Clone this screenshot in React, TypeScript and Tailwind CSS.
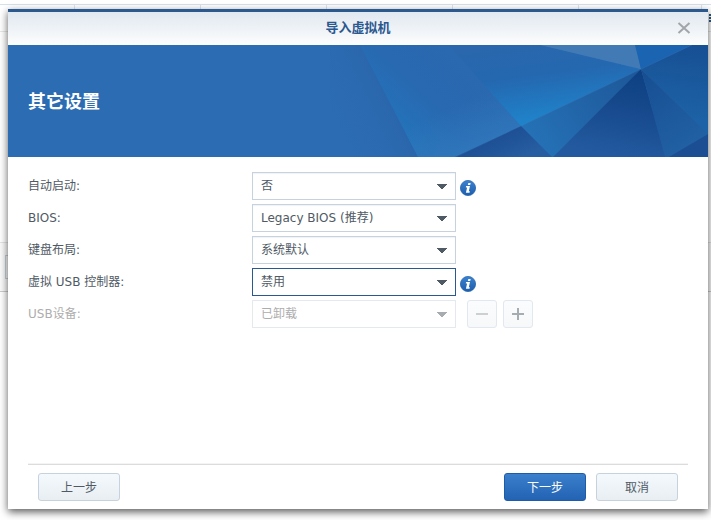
import { useState } from "react";

interface Option {
    value: string;
    label: string;
}

interface FieldProps {
    id: string;
    label: string;
    options: Option[];
    info?: boolean;
    active?: boolean;
    disabled?: boolean;
    children?: React.ReactNode;
}

function InfoIcon() {
    return (
        <svg width="16" height="16" viewBox="0 0 16 16" role="img" aria-label="说明">
            <defs>
                <linearGradient id="info-fill" x1="0" y1="0" x2="0" y2="1">
                    <stop offset="0" stopColor="#3b83d0" />
                    <stop offset="1" stopColor="#1d5dac" />
                </linearGradient>
            </defs>
            <circle cx="8" cy="8" r="7.6" fill="url(#info-fill)" stroke="#2a66ad" strokeWidth="0.8" />
            <path d="M8.3 2.9h2.4l-.5 2.2H7.8z" fill="#fff" />
            <path d="M6.1 6h3.9L8.8 11.3h1.1l-.4 1.5H5.9l1.2-5.3H5.8z" fill="#fff" />
        </svg>
    );
}

function Field({ id, label, options, info, active, disabled, children }: FieldProps) {
    const [value, setValue] = useState(options[0].value);

    return (
        <div className={`flex h-7 ${disabled ? "text-[#adadad]" : "text-[#505a64]"}`}>
            <label htmlFor={id} className="w-56 shrink-0 leading-7">
                {label}
            </label>
            <div className="relative w-[204px] shrink-0">
                <select
                    id={id}
                    value={value}
                    disabled={disabled}
                    onChange={(e) => setValue(e.target.value)}
                    className={`h-7 w-full appearance-none border bg-white pr-8 pl-2 leading-5 opacity-100 outline-none ${
                        active
                            ? "border-[#2a588f]"
                            : disabled
                              ? "border-[#e4e9ee]"
                              : "border-[#c6d2dd] shadow-[inset_0_1px_1px_#f0f2f5]"
                    }`}
                >
                    {options.map((option) => (
                        <option key={option.value} value={option.value}>
                            {option.label}
                        </option>
                    ))}
                </select>
                <svg
                    width="10"
                    height="5"
                    viewBox="0 0 10 5"
                    className="pointer-events-none absolute top-3 right-[9px]"
                    aria-hidden="true"
                >
                    <path d="M0 0h10v1H9v1H8v1H7v1H6v1H4V4H3V3H2V2H1V1H0z" fill={disabled ? "#a7acb1" : "#505a64"} />
                </svg>
            </div>
            {info && (
                <div className="mt-2 ml-1">
                    <InfoIcon />
                </div>
            )}
            {children}
        </div>
    );
}

function SquareButton({ label, disabled, children }: { label: string; disabled?: boolean; children: React.ReactNode }) {
    return (
        <button
            type="button"
            aria-label={label}
            disabled={disabled}
            className="flex h-7 w-[30px] items-center justify-center rounded-[3px] border border-[#e2e8ef] bg-linear-to-b from-[#fafcfe] to-[#f6f8fa]"
        >
            {children}
        </button>
    );
}

function Facets() {
    return (
        <svg
            viewBox="330 45 378 112"
            preserveAspectRatio="xMaxYMid slice"
            className="absolute inset-y-0 right-0 h-full w-[378px]"
            aria-hidden="true"
        >
            <defs>
                <linearGradient id="edge" gradientUnits="userSpaceOnUse" x1="334" y1="118" x2="396" y2="88">
                    <stop offset="0" stopColor="#2c6cb3" />
                    <stop offset="0.65" stopColor="#2b69af" />
                    <stop offset="1" stopColor="#2963a7" />
                </linearGradient>
                <linearGradient id="panel" gradientUnits="userSpaceOnUse" x1="470" y1="70" x2="404" y2="140">
                    <stop offset="0" stopColor="#2a68af" />
                    <stop offset="0.5" stopColor="#2869b1" />
                    <stop offset="1" stopColor="#2374bb" />
                </linearGradient>
                <linearGradient id="panel-foot" gradientUnits="userSpaceOnUse" x1="470" y1="100" x2="487" y2="142">
                    <stop offset="0" stopColor="#2f75ba" stopOpacity="0" />
                    <stop offset="1" stopColor="#2f75ba" />
                </linearGradient>
                <linearGradient id="bright" gradientUnits="userSpaceOnUse" x1="515" y1="45" x2="526" y2="126">
                    <stop offset="0" stopColor="#2a67ac" />
                    <stop offset="0.4" stopColor="#2468b0" />
                    <stop offset="1" stopColor="#1f85cc" />
                </linearGradient>
                <linearGradient id="mid" gradientUnits="userSpaceOnUse" x1="641" y1="69" x2="535" y2="142">
                    <stop offset="0" stopColor="#1c5798" />
                    <stop offset="0.5" stopColor="#2163a6" />
                    <stop offset="1" stopColor="#2571b6" />
                </linearGradient>
                <linearGradient id="low" gradientUnits="userSpaceOnUse" x1="508" y1="126" x2="522" y2="157">
                    <stop offset="0" stopColor="#1b4d92" />
                    <stop offset="1" stopColor="#275da1" />
                </linearGradient>
                <linearGradient id="deep" gradientUnits="userSpaceOnUse" x1="641" y1="69" x2="625" y2="157">
                    <stop offset="0" stopColor="#0d3f83" />
                    <stop offset="0.4" stopColor="#15478b" />
                    <stop offset="1" stopColor="#235a9f" />
                </linearGradient>
                <linearGradient id="side" gradientUnits="userSpaceOnUse" x1="645" y1="75" x2="690" y2="145">
                    <stop offset="0" stopColor="#184f93" />
                    <stop offset="1" stopColor="#2060a3" />
                </linearGradient>
                <linearGradient id="corner" gradientUnits="userSpaceOnUse" x1="700" y1="45" x2="690" y2="120">
                    <stop offset="0" stopColor="#174f93" />
                    <stop offset="1" stopColor="#1d62a6" />
                </linearGradient>
            </defs>
            <path d="M330 45H361L419 157H330z" fill="url(#edge)" />
            <path d="M360 45H448L521 126L456 157H418z" fill="url(#panel)" />
            <path d="M360 45H448L521 126L456 157H418z" fill="url(#panel-foot)" />
            <path d="M448 45H541L641 69L521 126z" fill="url(#bright)" />
            <path d="M541 45H636L641 69z" fill="#417ab5" />
            <path d="M635 45H692L641 69z" fill="#1b64b1" />
            <path d="M641 69L521 126L552 157H555z" fill="url(#mid)" />
            <path d="M521 126L552 157H455z" fill="url(#low)" />
            <path d="M641 69L553 157H666z" fill="url(#deep)" />
            <path d="M692 45H708V135L641 69z" fill="url(#corner)" />
            <path d="M641 69L665 157H670L708 134z" fill="url(#side)" />
            <path d="M708 134V157H669z" fill="#1c4e93" />
            <path d="M456 157L692 45M541 45L641 69" stroke="#5b96cc" strokeOpacity="0.15" fill="none" />
        </svg>
    );
}

/* Table and toolbar of the window that lies under the dialog */
function Backdrop() {
    return (
        <div className="absolute inset-0 overflow-hidden" aria-hidden="true">
            <div className="mt-1 flex h-7 justify-between border-y border-t-[#d5e1ed] border-b-[#e8e8e8]">
                <div className="flex">
                    <div className="w-[75px] border-r border-[#dce5ef]" />
                    <div className="w-[126px] border-r border-[#dce5ef]" />
                    <div className="w-[126px] border-r border-[#dce5ef]" />
                    <div className="w-[126px] border-r border-[#dce5ef]" />
                    <div className="w-[126px] border-r border-[#dce5ef]" />
                    <div className="w-[123px] border-r border-[#dce5ef]" />
                </div>
                <div className="mt-[9px] flex w-[2px] flex-col gap-px">
                    <div className="h-[2px] bg-[#2a588f]" />
                    <div className="h-[2px] bg-[#2a588f]" />
                    <div className="h-[2px] bg-[#2a588f]" />
                </div>
            </div>
            <div className="mt-[210px] flex h-[50px] items-center border-y border-t-[#e4e4e4] border-b-[#cccccc] bg-[#fafafa] pl-[5px]">
                <div className="h-6 w-20 border border-[#c6d2dd]" />
            </div>
        </div>
    );
}

export default function App() {
    return (
        <div className="relative flex min-h-screen bg-white pt-[9px] pr-[3px] pb-[11px] pl-2 font-['DejaVu_Sans','Noto_Sans_CJK_SC',sans-serif] text-xs">
            <Backdrop />
            <section
                role="dialog"
                aria-labelledby="dialog-title"
                className="relative flex flex-1 flex-col border-t-3 border-[#2a588f] bg-white shadow-[0_3px_8px_rgba(0,0,0,0.65)]"
            >
                <header className="grid h-[33px] shrink-0 grid-cols-[1fr_auto_1fr] items-center bg-linear-to-b from-[#e1e8f0] to-[#fcfdfd] pr-4 pb-px">
                    <h1 id="dialog-title" className="col-start-2 pl-4 text-[13px] leading-5 font-bold text-[#2a588f]">
                        导入虚拟机
                    </h1>
                    <button type="button" aria-label="关闭" className="flex h-4 w-4 items-center justify-center justify-self-end">
                        <svg width="14" height="12" viewBox="0 0 14 12" fill="none" stroke="#a2a6aa" strokeWidth="2">
                            <path d="M1.5 1l11 10M12.5 1l-11 10" />
                        </svg>
                    </button>
                </header>

                <div className="relative flex h-28 shrink-0 items-center overflow-hidden bg-[#2c6cb3] px-5 pt-0.5">
                    <Facets />
                    <h2 className="relative text-lg leading-7 font-bold text-white">其它设置</h2>
                </div>

                <form className="flex flex-1 flex-col px-5" onSubmit={(e) => e.preventDefault()}>
                    <div className="flex flex-1 flex-col gap-1 pt-[15px]">
                        <Field id="autostart" label="自动启动:" options={[{ value: "no", label: "否" }, { value: "yes", label: "是" }]} info />
                        <Field
                            id="bios"
                            label="BIOS:"
                            options={[{ value: "legacy", label: "Legacy BIOS (推荐)" }, { value: "uefi", label: "UEFI" }]}
                        />
                        <Field id="keyboard" label="键盘布局:" options={[{ value: "default", label: "系统默认" }]} />
                        <Field id="usb-controller" label="虚拟 USB 控制器:" options={[{ value: "off", label: "禁用" }]} info active />
                        <Field id="usb-device" label="USB设备:" options={[{ value: "unmounted", label: "已卸载" }]} disabled>
                            <div className="ml-[11px] flex gap-[6px]">
                                <SquareButton label="移除" disabled>
                                    <svg width="12" height="12" viewBox="0 0 12 12">
                                        <path d="M0 5h12v2H0z" fill="#cdd0d3" />
                                    </svg>
                                </SquareButton>
                                <SquareButton label="添加" disabled>
                                    <svg width="12" height="12" viewBox="0 0 12 12">
                                        <path d="M0 5h5V0h2v5h5v2H7v5H5V7H0z" fill="#a7acb1" />
                                    </svg>
                                </SquareButton>
                            </div>
                        </Field>
                    </div>

                    <footer className="flex gap-[10px] border-t border-[#dcdcdc] px-[10px] py-2 text-[#505a64] shadow-[0_-1px_0_#f4f4f4]">
                        <button
                            type="button"
                            className="mr-auto h-7 w-[82px] rounded-[3px] border border-[#c6d2dd] bg-linear-to-b from-[#f4f9fe] to-[#e9eef3] pt-0.5"
                        >
                            上一步
                        </button>
                        <button
                            type="submit"
                            className="h-7 w-[82px] rounded-[3px] border border-[#1f5ba6] bg-linear-to-b from-[#3b80cc] to-[#2263b3] pt-0.5 text-white"
                        >
                            下一步
                        </button>
                        <button
                            type="button"
                            className="h-7 w-[82px] rounded-[3px] border border-[#c6d2dd] bg-linear-to-b from-[#f4f9fe] to-[#e9eef3] pt-0.5"
                        >
                            取消
                        </button>
                    </footer>
                </form>
            </section>
        </div>
    );
}
